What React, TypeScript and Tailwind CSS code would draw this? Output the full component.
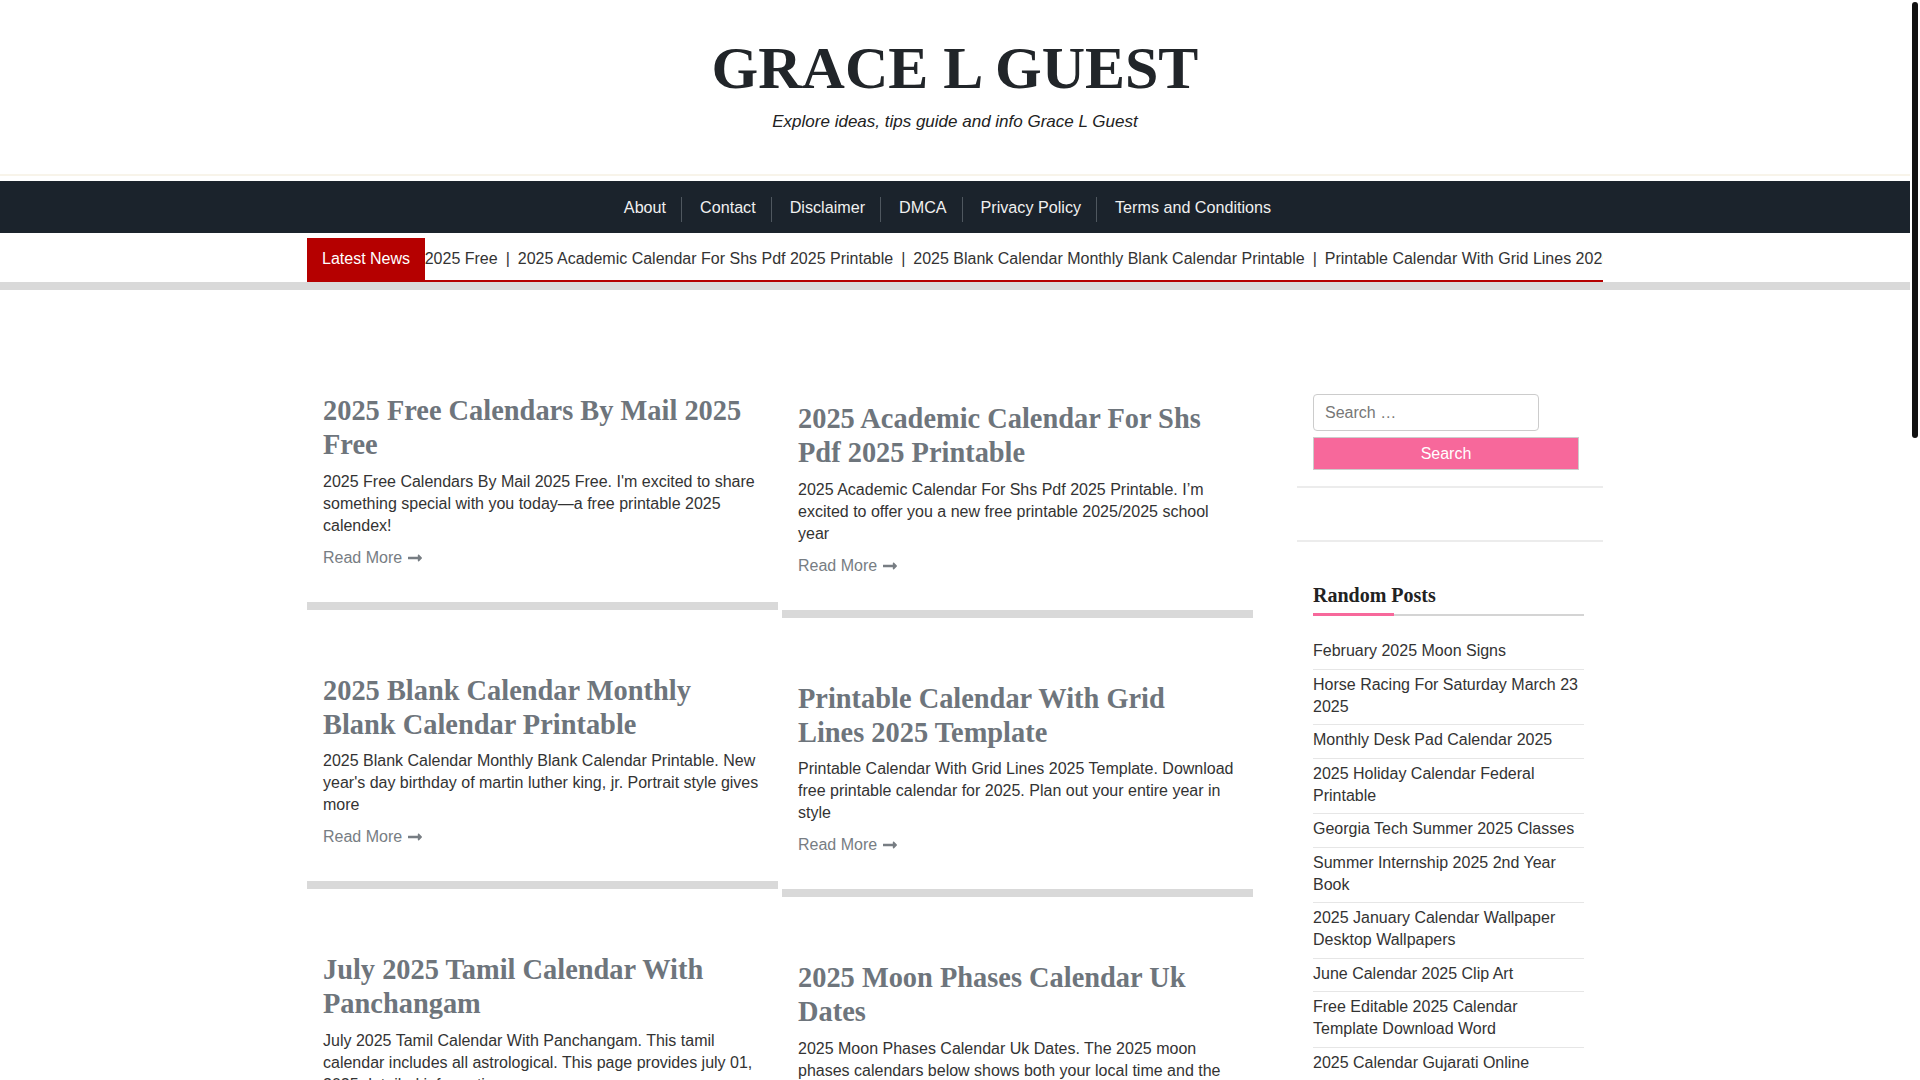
import React from "react";

type Post = { title: string; excerpt: string };

const posts: Post[] = [
  {
    title: "2025 Free Calendars By Mail 2025 Free",
    excerpt:
      "2025 Free Calendars By Mail 2025 Free. I'm excited to share something special with you today—a free printable 2025 calendex!",
  },
  {
    title: "2025 Academic Calendar For Shs Pdf 2025 Printable",
    excerpt:
      "2025 Academic Calendar For Shs Pdf 2025 Printable. I’m excited to offer you a new free printable 2025/2025 school year",
  },
  {
    title: "2025 Blank Calendar Monthly Blank Calendar Printable",
    excerpt:
      "2025 Blank Calendar Monthly Blank Calendar Printable. New year's day birthday of martin luther king, jr. Portrait style gives more",
  },
  {
    title: "Printable Calendar With Grid Lines 2025 Template",
    excerpt:
      "Printable Calendar With Grid Lines 2025 Template. Download free printable calendar for 2025. Plan out your entire year in style",
  },
  {
    title: "July 2025 Tamil Calendar With Panchangam",
    excerpt:
      "July 2025 Tamil Calendar With Panchangam. This tamil calendar includes all astrological. This page provides july 01, 2025 detailed information.",
  },
  {
    title: "2025 Moon Phases Calendar Uk Dates",
    excerpt:
      "2025 Moon Phases Calendar Uk Dates. The 2025 moon phases calendars below shows both your local time and the moon phase.",
  },
];

const navItems = ["About", "Contact", "Disclaimer", "DMCA", "Privacy Policy", "Terms and Conditions"];

const randomPosts = [
  "February 2025 Moon Signs",
  "Horse Racing For Saturday March 23 2025",
  "Monthly Desk Pad Calendar 2025",
  "2025 Holiday Calendar Federal Printable",
  "Georgia Tech Summer 2025 Classes",
  "Summer Internship 2025 2nd Year Book",
  "2025 January Calendar Wallpaper Desktop Wallpapers",
  "June Calendar 2025 Clip Art",
  "Free Editable 2025 Calendar Template Download Word",
  "2025 Calendar Gujarati Online",
];

function ArrowRight() {
  return (
    <svg viewBox="0 0 448 512" className="ml-[6px] h-[16px] w-[14px]" fill="currentColor">
      <path d="M313.941 216H12c-6.627 0-12 5.373-12 12v56c0 6.627 5.373 12 12 12h301.941v46.059c0 21.382 25.851 32.09 40.971 16.971l86.059-86.059c9.373-9.373 9.373-24.569 0-33.941l-86.059-86.059c-15.119-15.119-40.971-4.411-40.971 16.971V216z" />
    </svg>
  );
}

function PostCard({ title, excerpt }: Post) {
  return (
    <article className="border-b-8 border-[#d9d9d9] px-4 pt-4 pb-[33px]">
      <h2 className="font-['Liberation_Serif',serif] text-[28.4px] font-bold leading-[34.3px] text-[#6e757c]">
        {title}
      </h2>
      <p className="mt-2 text-[16px] leading-[22px] text-[#333]">{excerpt}</p>
      <a href="#" className="mt-[10px] flex items-center text-[16px] leading-[22px] text-[#777d83]">
        Read More
        <ArrowRight />
      </a>
    </article>
  );
}

export default function App() {
  const leftPosts = [posts[0], posts[2], posts[4]];
  const rightPosts = [posts[1], posts[3], posts[5]];

  return (
    <div className="flex h-screen overflow-hidden bg-white font-['Liberation_Sans',Arial,sans-serif] text-[16px]">
      <div className="h-full flex-1 overflow-y-auto [scrollbar-width:none]">
        {/* site header */}
        <header className="border-b-2 border-[#f8f4ea] pt-[32px] pb-[40px] text-center">
          <h1 className="font-['Liberation_Serif',serif] text-[60px] font-bold leading-[72px] text-[#212529]">
            GRACE L GUEST
          </h1>
          <p className="mt-[6px] text-[17px] italic leading-[24px] text-[#222]">
            Explore ideas, tips guide and info Grace L Guest
          </p>
        </header>

        {/* main menu */}
        <nav className="mt-[5px] flex h-[52px] justify-center bg-[#1b232c] pt-[16px]">
          <ul className="mr-[18px] flex">
            {navItems.map((item) => (
              <li
                key={item}
                className="h-[25px] border-r border-[#4f575f] pl-[18px] pr-[15px] text-[16.15px] leading-[20px] text-[#f0f0f0] last:border-r-0"
              >
                <a href="#">{item}</a>
              </li>
            ))}
          </ul>
        </nav>

        {/* latest news ticker */}
        <div className="mx-auto mt-[5px] flex h-[44px] w-[1296px] border-b-2 border-[#b50000]">
          <div className="flex h-full shrink-0 items-center bg-[#b50000] px-[15px] text-white">Latest News</div>
          <div className="flex flex-1 items-center overflow-hidden whitespace-nowrap text-[#333]">
            <div className="ml-[-212px] flex">
              {posts.map((p, i) => (
                <React.Fragment key={p.title}>
                  {i > 0 && <span className="px-[8px]">|</span>}
                  <a href="#">{p.title}</a>
                </React.Fragment>
              ))}
            </div>
          </div>
        </div>
        <div className="h-[8px] bg-[#d9d9d9]" />

        {/* content */}
        <main className="mx-auto flex w-[1296px] gap-[44px] pt-[88px] pb-[60px]">
          <div className="flex w-[946px] shrink-0 gap-[4px]">
            <div className="flex w-[471px] flex-col gap-[48px]">
              {leftPosts.map((p) => (
                <PostCard key={p.title} {...p} />
              ))}
            </div>
            <div className="mt-[8px] flex w-[471px] flex-col gap-[48px]">
              {rightPosts.map((p) => (
                <PostCard key={p.title} {...p} />
              ))}
            </div>
          </div>

          <aside className="w-[306px] shrink-0">
            <div className="border-b-2 border-[#ececec] p-4">
              <input
                type="search"
                placeholder="Search …"
                className="block h-[37px] w-[226px] rounded-[4px] border border-[#ccc] px-[11px] text-[16px] text-[#333] outline-none placeholder:text-[#777]"
              />
              <button className="mt-[6px] block h-[33px] w-[266px] border border-[#ccc] bg-[#f7689b] text-[16px] text-white">
                Search
              </button>
            </div>
            <div className="h-[54px] border-b-2 border-[#ececec]" />
            <div className="px-4 pt-[41px]">
              <h3 className="relative w-[271px] border-b-2 border-[#d4d4d4] pb-[7px] font-['Liberation_Serif',serif] text-[20px] font-bold leading-[24px] text-[#222]">
                Random Posts
                <span className="absolute bottom-[-2px] left-0 h-[3px] w-[81px] bg-[#f7689b]" />
              </h3>
              <ul className="mt-[20px] w-[271px]">
                {randomPosts.map((t) => (
                  <li
                    key={t}
                    className="border-b border-[#e6e6e6] pt-[4px] pb-[6.5px] text-[16px] leading-[22px] text-[#333]"
                  >
                    <a href="#">{t}</a>
                  </li>
                ))}
              </ul>
            </div>
          </aside>
        </main>
      </div>

      {/* scrollbar thumb as seen in the page */}
      <div className="w-[10px] shrink-0 pt-[2px]">
        <div className="mx-[2px] h-[436px] w-[6px] rounded-full bg-[#111]" />
      </div>
    </div>
  );
}
